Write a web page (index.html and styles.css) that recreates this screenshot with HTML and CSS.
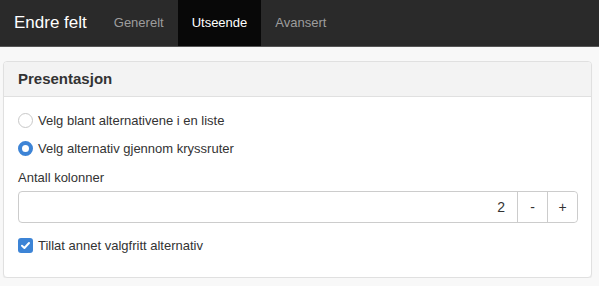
FILE: index.html
```html
<!DOCTYPE html>
<html lang="nb">
<head>
    <meta charset="UTF-8">
    <title>Endre felt</title>
    <link rel="stylesheet" href="styles.css">
</head>
<body>
    <div class="navbar">
        <div class="brand">Endre felt</div>
        <div class="tabs">
            <a class="tab">Generelt</a>
            <a class="tab active">Utseende</a>
            <a class="tab">Avansert</a>
        </div>
    </div>
    <div class="content">
        <div class="panel">
            <div class="panel-heading">Presentasjon</div>
            <div class="panel-body">
                <label class="option">
                    <span class="radio"></span>
                    Velg blant alternativene i en liste
                </label>
                <label class="option">
                    <span class="radio checked"></span>
                    Velg alternativ gjennom kryssruter
                </label>
                <div class="field-label">Antall kolonner</div>
                <div class="input-group">
                    <div class="input">2</div>
                    <button class="step">-</button>
                    <button class="step">+</button>
                </div>
                <label class="option check-row">
                    <span class="checkbox">
                        <svg width="11" height="11" viewBox="0 0 11 11"><path d="M2 5.8 L4.4 8 L9 3" fill="none" stroke="#fff" stroke-width="2" stroke-linecap="round" stroke-linejoin="round"/></svg>
                    </span>
                    Tillat annet valgfritt alternativ
                </label>
            </div>
        </div>
    </div>
</body>
</html>
```

FILE: styles.css
```css
html, body {
    margin: 0;
    padding: 0;
}
body {
    background: #f8f8f8;
    color: #333;
    font-family: "Liberation Sans", Arial, sans-serif;
    font-size: 13px;
}
.navbar {
    background: #2a2a2a;
    height: 46px;
    border-bottom: 1px solid #555;
    display: flex;
    align-items: stretch;
}
.brand {
    color: #fff;
    font-size: 17px;
    line-height: 46px;
    padding: 0 13px 0 14px;
}
.tabs {
    display: flex;
}
.tab {
    color: #9d9d9d;
    line-height: 46px;
    padding: 0 14px;
}
.tab.active {
    background: #080808;
    color: #fff;
}
.content {
    padding: 14px 7px 0 3px;
}
.panel {
    background: #fff;
    border: 1px solid #e0e0e0;
    border-radius: 4px;
    box-shadow: 0 1px 1px rgba(0,0,0,0.05);
}
.panel-heading {
    background: #f3f3f3;
    border-bottom: 1px solid #e0e0e0;
    border-radius: 3px 3px 0 0;
    font-size: 15px;
    font-weight: bold;
    padding: 9px 14px;
    line-height: 16px;
}
.panel-body {
    padding: 13px 14px 22px 14px;
}
.option {
    display: flex;
    align-items: center;
    gap: 5px;
    height: 20px;
    margin-bottom: 8px;
}
.radio {
    width: 13px;
    height: 13px;
    border: 1px solid #c8c8c8;
    border-radius: 50%;
    background: #fff;
    box-sizing: content-box;
}
.radio.checked {
    background: #fff;
    border: 4px solid #3d84d6;
    width: 7px;
    height: 7px;
}
.field-label {
    margin-top: 11px;
    line-height: 18px;
}
.input-group {
    display: flex;
    margin-top: 4px;
    height: 32px;
    width: 560px;
    border: 1px solid #ccc;
    border-radius: 4px;
    box-sizing: border-box;
}
.input {
    flex: 1;
    text-align: right;
    line-height: 30px;
    padding-right: 12px;
    font-size: 14px;
}
.step {
    width: 30px;
    background: #fff;
    border: none;
    border-left: 1px solid #ccc;
    font-family: inherit;
    font-size: 14px;
    color: #333;
    padding: 0;
}
.step:last-child {
    border-radius: 0 4px 4px 0;
}
.check-row {
    margin-top: 12px;
    margin-bottom: 0;
}
.checkbox {
    width: 15px;
    height: 15px;
    background: #3d84d6;
    border-radius: 3px;
    display: flex;
    align-items: center;
    justify-content: center;
}
```
